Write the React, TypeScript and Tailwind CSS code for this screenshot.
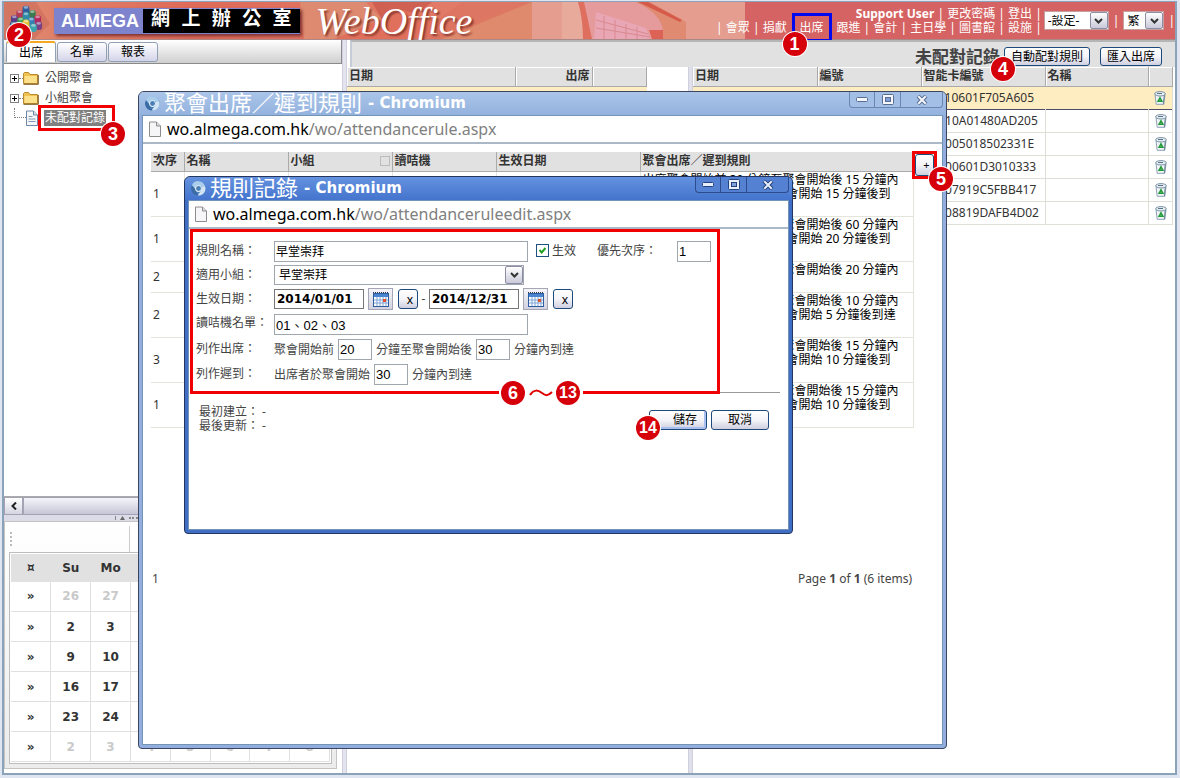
import type { ReactNode } from 'react';

const ui = "font-['Noto_Sans','Noto_Sans_CJK_TC',sans-serif]";
const wide = "font-['DejaVu_Sans','Noto_Sans_CJK_TC',sans-serif]";
const arial = "font-['Liberation_Sans','Noto_Sans_CJK_TC',sans-serif]";

const xpButton =
  'rounded-[3px] border border-[#1c4a7c] bg-linear-to-b from-white via-[#f4f4f9] to-[#cfcfe0] text-black whitespace-nowrap flex items-center justify-center';

function Badge({ n, className = '' }: { n: number; className?: string }) {
  return (
    <span
      className={`absolute z-20 flex size-6 items-center justify-center rounded-full bg-[#d6000b] font-['Liberation_Sans',sans-serif] leading-none text-white ring-1 ring-white ${n > 9 ? 'text-base' : 'text-lg'} font-bold ${className}`}
    >
      {n}
    </span>
  );
}

function LotusIcon() {
  const petals: [number, number, string][] = [
    [17, 5, '#2f5f9e'], [11, 9, '#b33a54'], [23, 9, '#3d7a4e'], [17, 11, '#2d8ca8'],
    [6, 14, '#5b3d86'], [28, 14, '#b6285c'], [12, 16, '#3b9a55'], [22, 16, '#357fb5'],
    [5, 20, '#27568d'], [29, 20, '#7b3f83'], [17, 18, '#e0c02e'], [10, 22, '#d98a22'], [24, 22, '#3aa3ae'],
  ];
  return (
    <svg className="h-[34px] w-9" viewBox="0 0 34 32" aria-hidden="true">
      {petals.map(([x, y, c]) => (
        <g key={`${x}-${y}`}>
          <rect x={x - 3.2} y={y - 3.5} width="6.4" height="8" rx="2.6" fill={c} />
          <ellipse cx={x} cy={y - 1.8} rx="2.2" ry="1.3" fill="#fff" opacity=".45" />
        </g>
      ))}
    </svg>
  );
}

function HeaderArt() {
  return (
    <svg className="absolute inset-0 h-full w-full" viewBox="0 0 1171 37" preserveAspectRatio="xMinYMid slice" aria-hidden="true">
      <defs>
        <linearGradient id="sky" x1="0" x2="1">
          <stop offset="0" stopColor="#e08a70" />
          <stop offset=".35" stopColor="#df6a58" />
          <stop offset="1" stopColor="#e2806c" />
        </linearGradient>
      </defs>
      <rect width="1400" height="37" fill="#d66363" />
      <rect width="530" height="37" fill="url(#sky)" />
      <path d="M0 0h32L46 22 30 37H0z" fill="#c96a5a" opacity=".6" />
      <path d="M296 0h66l34 37H300z" fill="#dd8a70" />
      <path d="M368 0h60l-20 16 -24 12z" fill="#c8574a" opacity=".7" />
      <path d="M330 37 400 8l40 14 -20 15z" fill="#e0705c" />
      <path d="M528 0v37H436L470 22z" fill="#df8a6c" />
      <path d="M528 0h-70l-50 37h30z" fill="#dc7460" opacity=".7" />
      <rect x="528" width="213" height="37" fill="#e59d8f" />
      <rect x="558" width="22" height="37" fill="#e7aa9b" />
      <path d="M576 0h62q30 18 24 37h-80q-2-20-6-37z" fill="#e59a9c" />
      <path d="M574 0h6l8 37h-9q0-20-5-37z" fill="#de6e5e" />
      <path d="M590 37 592 10l50 16 4 11z" fill="#e9a6b4" />
      <path d="M600 37V14M611 37V18M622 37V22M633 37V25M592 18l52 14M592 26l54 9" stroke="#d98a90" strokeWidth="1" />
      <path d="M632 0h14l36 20v17h-24q6-22-26-37z" fill="#e08a72" />
      <path d="M634 0h10l34 18-2 2z" fill="#d65a4a" />
      <path d="M645 28h14v9h-11z" fill="#dc6256" />
    </svg>
  );
}

function PageIcon({ lines = false }: { lines?: boolean }) {
  return (
    <svg className="h-4 w-3 shrink-0" viewBox="0 0 12 16" aria-hidden="true">
      <path d="M.5 1h7L11.500 5v10.500H.5z" fill="#f6f6f8" stroke={lines ? '#6c87a8' : '#8c8c8c'} />
      <path d="M7.500 1v4h4" fill="#dcdcdc" stroke={lines ? '#6c87a8' : '#8c8c8c'} />
      {lines && <path d="M2.500 6.500h4M2.500 9h7M2.500 11.500h7" stroke="#7d97b5" />}
    </svg>
  );
}

function FolderIcon() {
  return (
    <svg className="h-[13px] w-4 shrink-0" viewBox="0 0 16 13" aria-hidden="true">
      <path d="M.5 11.500v-10l1-1h4l1.500 2h7.500v9z" fill="#f1c24f" stroke="#b9892f" />
      <path d="M1.500 4h12.500v7H1.500z" fill="#fce08a" />
      <path d="M.5 12.300h14.800V3" stroke="#7a5a1e" fill="none" />
    </svg>
  );
}

function ChromiumIcon() {
  return (
    <svg className="size-[15px] shrink-0" viewBox="0 0 16 16" aria-hidden="true">
      <circle cx="8" cy="8" r="7.500" fill="#4f86bd" />
      <path d="M1 4.500A7.500 7.500 0 0 1 15 5.500H8L5 9z" fill="#a9cdea" />
      <path d="M15 5.500A7.500 7.500 0 0 1 7 15.500L11.500 9V5.500z" fill="#d3e5f5" />
      <path d="M1 4.500 5 9.500l3 6A7.500 7.500 0 0 1 1 4.500z" fill="#3a6ca5" />
      <circle cx="8" cy="8" r="3.600" fill="#e6f0f9" />
      <circle cx="8" cy="8" r="2.600" fill="#4b7fb8" />
    </svg>
  );
}

function TrashIcon() {
  return (
    <svg className="h-[14px] w-3" viewBox="0 0 12 14" aria-hidden="true">
      <path d="M1 3.500 2.200 13.300h7.600L11 3.500z" fill="#f1f5f9" stroke="#8ea2b3" />
      <path d="M9.800 13.300 11 3.500H9.800L8.800 13.300z" fill="#6d8598" />
      <ellipse cx="6" cy="2.800" rx="5.400" ry="2.200" fill="#e6eef5" stroke="#7d94a6" />
      <path d="M3 2.500h5" stroke="#5d7486" />
      <path d="M6 6.800 7.900 10.300H4.100z" fill="none" stroke="#1f9a35" strokeWidth="1.500" />
    </svg>
  );
}

function CalendarIcon() {
  return (
    <svg className="h-[15px] w-4" viewBox="0 0 16 15" aria-hidden="true">
      <rect x=".5" y="1.500" width="15" height="13" fill="#fff" stroke="#2d5c9f" />
      <path d="M1 2h14v3H1z" fill="#4a83cf" />
      <path d="M0 .5h16" stroke="#334" strokeDasharray="1 1" />
      <path d="M1 8h14M1 11h14M4 5v9M7 5v9M10 5v9M13 5v9" stroke="#7fa3d6" />
      <rect x="10" y="7" width="3" height="3" fill="#e2502b" />
    </svg>
  );
}

function Chevron() {
  return (
    <span className="pointer-events-none absolute inset-y-px right-px flex w-[18px] items-center justify-center rounded-[2px] border border-[#8d8da6] bg-linear-to-b from-white to-[#c9c9da]">
      <svg className="h-[6px] w-[9px]" viewBox="0 0 9 6" aria-hidden="true">
        <path d="M1 1l3.500 3.500L8 1" fill="none" stroke="#333" strokeWidth="2" />
      </svg>
    </span>
  );
}

function MiniSelect({ label, value, className }: { label: string; value: string; className: string }) {
  return (
    <span className={`relative block ${className}`}>
      <select aria-label={label} className="block h-full w-full appearance-none border border-[#c5a0a0] bg-white pl-[3px] text-xs leading-none text-black">
        <option>{value}</option>
      </select>
      <Chevron />
    </span>
  );
}

const menu = ['會眾', '捐獻', '出席', '跟進', '會計', '主日學', '圖書館', '設施'];

function Header() {
  return (
    <header className="relative flex h-[38px] justify-between border-b border-[#a88] text-white">
      <HeaderArt />
      <div className="relative flex items-center pl-1">
        <LotusIcon />
        <div className="ml-[10px] flex h-[26px] items-center bg-[#7d83cd] pl-[7px] shadow-[2px_2px_3px_#7a3030]">
          <span className="font-['Liberation_Sans',sans-serif] text-lg leading-none font-bold">ALMEGA</span>
          <span className="ml-1 flex h-6 items-center bg-black px-2 font-['Liberation_Mono','Noto_Sans_CJK_TC',monospace] text-[19px] leading-none font-bold whitespace-nowrap">
            網 上 辦 公 室
          </span>
        </div>
        <span className="ml-4 font-['Liberation_Serif',serif] text-[38px] leading-none italic [text-shadow:2px_2px_2px_#8a3a30]">WebOffice</span>
      </div>
      <div className="relative flex items-start">
        <nav className="pt-[5px] text-right text-xs leading-[14px] whitespace-nowrap">
          <div>
            <b>Support User</b> | <a href="#password">更改密碼</a> | <a href="#logout">登出</a> |
          </div>
          <div>
            {menu.map((m, i) => (
              <span key={m}>
                |{' '}
                {i === 2 ? (
                  <span className="relative">
                    <a href={`#${m}`}>{m}</a>
                    <span className="absolute -inset-x-2 -inset-y-[6px] border-[3px] border-[#0008f0]" />
                    <Badge n={1} className="top-[13px] -left-[17px]" />
                  </span>
                ) : (
                  <a href={`#${m}`}>{m}</a>
                )}{' '}
              </span>
            ))}
            |
          </div>
        </nav>
        <div className="flex items-center gap-1 pt-[9px] pl-[2px] text-xs leading-none">
          <MiniSelect label="設定" value="-設定-" className="h-[19px] w-[65px]" />
          <span>|</span>
          <MiniSelect label="語言" value="繁" className="h-[19px] w-[41px]" />
          <span>|</span>
        </div>
      </div>
    </header>
  );
}

function TreeRow({ expandable, children }: { expandable?: boolean; children: ReactNode }) {
  return (
    <li className="flex h-5 items-center">
      {expandable ? (
        <>
          <span className="flex size-[9px] items-center justify-center border border-[#808080] bg-white">
            <svg className="size-[5px]" viewBox="0 0 5 5" aria-hidden="true"><path d="M0 2.500h5M2.500 0v5" stroke="#000" /></svg>
          </span>
          <span className="w-1 border-t border-dotted border-[#808080]" />
        </>
      ) : (
        <span className="ml-1 h-[10px] w-[12px] self-start border-b border-l border-dotted border-[#808080]" />
      )}
      {children}
    </li>
  );
}

const weeks = [
  [26, 27, 28, 29, 30, 31, 1],
  [2, 3, 4, 5, 6, 7, 8],
  [9, 10, 11, 12, 13, 14, 15],
  [16, 17, 18, 19, 20, 21, 22],
  [23, 24, 25, 26, 27, 28, 1],
  [2, 3, 4, 5, 6, 7, 8],
];

function isMuted(week: number, day: number) {
  return (week === 0 && day > 20) || (week === 4 && day < 20) || week === 5;
}

function CalendarPanel() {
  return (
    <section className="mr-[5px] mb-1 border border-[#c4c4c4] bg-linear-to-b from-white to-[#ececec] p-1">
      <div className="flex h-[26px] items-center">
        <span className="ml-px h-[14px] border-l-2 border-dotted border-[#bbb]" />
        <span className="ml-[117px] h-full border-l border-[#ccc]" />
      </div>
      <div className="border border-[#bdbdbd] bg-white p-px">
        <table className={`w-full table-fixed border-collapse text-center text-xs font-bold text-[#333] ${wide}`}>
          <thead>
            <tr className="h-7 bg-[#e1e1e1]">
              {['¤', 'Su', 'Mo', 'Tu', 'We', 'Th', 'Fr', 'Sa'].map((d) => (
                <th key={d}>{d}</th>
              ))}
            </tr>
          </thead>
          <tbody>
            {weeks.map((w, wi) => (
              <tr key={wi} className="h-[30px]">
                <td className="border-r border-b border-[#e0e0e0] p-0">»</td>
                {w.map((d, di) => (
                  <td key={di} className={`border-r border-b border-[#e0e0e0] p-0 ${isMuted(wi, d) ? 'text-[#c9c9c9]' : ''}`}>{d}</td>
                ))}
              </tr>
            ))}
          </tbody>
        </table>
      </div>
    </section>
  );
}

function LeftPane() {
  return (
    <aside className="flex w-[338px] shrink-0 flex-col">
      <div className="relative flex h-[24px] items-end gap-px border border-t-0 border-l-0 border-[#8a8a8a] bg-linear-to-b from-white to-[#cfcfcf] pb-px pl-[2px] text-xs text-black">
        <button className="h-[21px] w-[50px] rounded-t-[3px] border border-t-2 border-b-0 border-[#91a0b5] border-t-[#f5a623] bg-white">出席</button>
        <button className="h-5 w-[50px] rounded-[3px] border border-[#91a0b5] bg-linear-to-b from-white to-[#d4d4ea]">名單</button>
        <button className="h-5 w-[50px] rounded-[3px] border border-[#91a0b5] bg-linear-to-b from-white to-[#d4d4ea]">報表</button>
        <Badge n={2} className="-top-[17px] left-[3px]" />
      </div>
      <ul className="flex-1 pt-1 pl-[6px] text-xs text-[#444]">
        <TreeRow expandable><FolderIcon /><span className="ml-[6px]">公開聚會</span></TreeRow>
        <TreeRow expandable><FolderIcon /><span className="ml-[6px]">小組聚會</span></TreeRow>
        <TreeRow>
          <PageIcon lines />
          <span className="relative flex h-[26px] items-center border-[3px] border-[#f00000] pr-[6px] pl-[3px]">
            <span className="bg-[#808080] px-px leading-4 text-white">未配對記錄</span>
            <Badge n={3} className="top-[14px] left-[60px]" />
          </span>
        </TreeRow>
      </ul>
      <div className="flex h-[19px] border-t border-[#aaa] bg-[#e6e6ee]">
        <button aria-label="向左捲動" className="flex w-[19px] items-center justify-center border border-[#a3a3b5] bg-linear-to-b from-white to-[#d5d5e2]">
          <svg className="h-2 w-[6px]" viewBox="0 0 6 8" aria-hidden="true"><path d="M5 .5 1.500 4 5 7.500" fill="none" stroke="#222" strokeWidth="2" /></svg>
        </button>
        <div className="flex-1 border border-[#a3a3b5] bg-linear-to-b from-[#f5f5f9] to-[#c6c6d8]" />
      </div>
      <div className="flex h-[6px] items-center gap-1 bg-[#dcdce8] pl-[111px]">
        <span className="h-1 border-l border-[#888]" />
        <svg className="h-1 w-[5px]" viewBox="0 0 5 4" aria-hidden="true"><path d="M0 4 2.500 0 5 4z" fill="#666" /></svg>
        <span className="w-6 border-t-2 border-dotted border-[#888]" />
      </div>
      <CalendarPanel />
    </aside>
  );
}

const headCell = 'border-r border-b border-[#aaa] bg-[#e1e1e1] px-[2px] py-0 font-bold shadow-[inset_1px_1px_0_#fff]';

const cards = [
  '00010601F705A605',
  '00010A01480AD205',
  '000005018502331E',
  '00000601D3010333',
  '00007919C5FBB417',
  '00008819DAFB4D02',
];

function MainPane() {
  return (
    <div className="flex min-w-0 flex-1 flex-col">
      <div className="relative ml-[3px] flex h-[27px] items-center justify-end gap-[10px] border-2 border-r-0 border-b-0 border-[#b5b5b5] border-l-[#c6cbd8] bg-[#e1e1e1] pt-1 pr-[13px]">
        <h1 className="-mr-[6px] text-[17px] leading-none font-bold text-[#444]">未配對記錄</h1>
        <span className="relative">
          <button className={`${xpButton} h-[19px] w-[86px] text-xs`}>自動配對規則</button>
          <Badge n={4} className="top-[10px] -left-[13px]" />
        </span>
        <button className={`${xpButton} h-[19px] w-[62px] text-xs`}>匯入出席</button>
      </div>
      <div className="flex flex-1">
        <div className="w-[341px] shrink-0">
          <table className="w-[300px] table-fixed border-collapse text-left text-xs text-[#333]">
            <thead>
              <tr className="h-[19px]">
                <th className={`w-[168px] ${headCell}`}>日期</th>
                <th className={`w-[77px] text-right ${headCell}`}>出席</th>
                <th className={headCell} />
              </tr>
            </thead>
            <tbody>
              <tr className="h-[23px] border-y border-[#4b4b6b] bg-[#ffedc2]"><td colSpan={3} /></tr>
            </tbody>
          </table>
        </div>
        <div className="w-[5px] shrink-0 border-x border-[#cfcfe0] bg-[#e0e0ea]" />
        <div className="min-w-0 flex-1 pr-[2px]">
          <table className="w-full table-fixed border-collapse text-left text-xs text-[#333]">
            <thead>
              <tr className="h-[19px]">
                <th className={`w-[124px] ${headCell}`}>日期</th>
                <th className={`w-[104px] ${headCell}`}>編號</th>
                <th className={`w-[124px] ${headCell}`}>智能卡編號</th>
                <th className={headCell}>名稱</th>
                <th className={`w-[24px] ${headCell}`} />
              </tr>
            </thead>
            <tbody>
              {cards.map((c, i) => (
                <tr key={c} className={`h-[23px] ${i === 0 ? 'border-y border-[#4b4b6b] bg-[#ffedc2]' : 'border-b border-[#dfdfd8]'}`}>
                  {['', '', c, ''].map((v, k) => (
                    <td key={k} className={`px-[3px] py-0 ${i ? 'border-r border-[#dfdfd8]' : ''}`}>{v}</td>
                  ))}
                  <td className="border-r border-[#dfdfd8] p-0">
                    <button aria-label="刪除" className="mx-auto flex items-center"><TrashIcon /></button>
                  </td>
                </tr>
              ))}
            </tbody>
          </table>
        </div>
      </div>
    </div>
  );
}

type WinProps = { active?: boolean; title: string; host: string; path: string; className: string; children: ReactNode };

function BrowserWindow({ active, title, host, path, className, children }: WinProps) {
  const chrome = active
    ? 'bg-[#3f6ec4] border-[#24365e]'
    : 'bg-[#93aede] border-[#3c4660]';
  const bar = active ? 'from-[#6492df] to-[#4474cd]' : 'from-[#abc5e9] to-[#93b2de]';
  const control = `flex h-4 items-center justify-center border border-t-0 ${active ? 'border-[#2c4c8c] bg-[#5581d2]' : 'border-[#6a86b4] bg-[#a3bfe6]'}`;
  const glyph = active ? '#e8eefa' : '#f4f7fc';
  const edge = active ? '#24427c' : '#5a6c90';
  return (
    <section className={`absolute flex flex-col rounded-t-[6px] rounded-b-[4px] border px-[3px] pb-[3px] ${chrome} ${className}`}>
      <div className={`-mx-[3px] flex h-[23px] items-center rounded-t-[5px] bg-linear-to-b pl-[6px] ${bar}`}>
        <ChromiumIcon />
        <h2 className={`ml-1 flex items-center text-[15px] leading-none font-bold whitespace-nowrap text-white ${wide}`}>
          <span className="mr-[6px] text-[22px] leading-none font-normal">{title}</span>- Chromium
        </h2>
        <div className="mr-[3px] ml-auto flex self-start">
          <button aria-label="最小化" className={`${control} w-[26px] rounded-bl-[4px]`}>
            <svg className="h-[5px] w-3" viewBox="0 0 12 5"><rect x=".5" y=".5" width="11" height="4" rx="1" fill={glyph} stroke={edge} /></svg>
          </button>
          <button aria-label="最大化" className={`${control} w-[26px] border-l-0`}>
            <svg className="h-[11px] w-3" viewBox="0 0 12 11">
              <rect x=".5" y=".5" width="11" height="10" rx="1" fill={glyph} stroke={edge} />
              <rect x="3.500" y="3.500" width="5" height="4" fill="#7fa0d8" stroke={edge} />
            </svg>
          </button>
          <button aria-label="關閉" className={`${control} w-[42px] rounded-br-[4px] border-l-0`}>
            <svg className="h-[10px] w-3" viewBox="0 0 12 10">
              <path d="M2 1l8 8M10 1L2 9" stroke={edge} strokeWidth="4" />
              <path d="M2.300 1.300l7.400 7.400M9.700 1.300L2.300 8.700" stroke={glyph} strokeWidth="2" />
            </svg>
          </button>
        </div>
      </div>
      <div className="flex flex-1 flex-col border border-[#7295b5] bg-white">
        <div className="flex h-7 items-center gap-[6px] border-b-2 border-[#aab8c8] pl-[6px] text-base leading-none whitespace-nowrap">
          <PageIcon />
          <span className="text-[#808080]"><span className="text-black">{host}</span>{path}</span>
        </div>
        {children}
      </div>
    </section>
  );
}

const rules = [
  { order: 1, before: 30, within: 15, late: 15 },
  { order: 1, before: 30, within: 60, late: 20 },
  { order: 2, before: 30, within: 20, late: 0 },
  { order: 2, before: 30, within: 10, late: 5 },
  { order: 3, before: 30, within: 15, late: 10 },
  { order: 1, before: 30, within: 15, late: 10 },
];

function RulesWindow() {
  const head = 'border-r border-b border-[#aaa] bg-[#e1e1e1] px-[2px] py-0 font-bold';
  const cell = 'border-r border-b border-[#e4e4dc] px-[2px] py-0';
  return (
    <BrowserWindow title="聚會出席／遲到規則" host="wo.almega.com.hk" path="/wo/attendancerule.aspx" className="top-[91px] left-[138px] h-[658px] w-[809px]">
      <div className="flex items-start pt-2 pl-2">
        <table className="w-[763px] table-fixed border-collapse text-left text-xs leading-[14px] text-[#333]">
          <thead>
            <tr className="h-[19px]">
              <th className={`w-[33px] ${head}`}>次序</th>
              <th className={`w-[104px] ${head}`}>名稱</th>
              <th className={`w-[104px] ${head}`}>
                <span className="flex items-center justify-between">小組<span className="size-[10px] border border-[#bbb]" /></span>
              </th>
              <th className={`w-[104px] ${head}`}>讀咭機</th>
              <th className={`w-[144px] ${head}`}>生效日期</th>
              <th className={`${head} border-r-[#e1e1e1]`}>聚會出席／遲到規則</th>
            </tr>
          </thead>
          <tbody>
            {rules.map((r, i) => (
              <tr key={i} className={r.late ? 'h-[45px]' : 'h-[31px]'}>
                <td className={cell}>{r.order}</td>
                <td className={cell} />
                <td className={cell} />
                <td className={cell} />
                <td className={cell} />
                <td className={`${cell} align-top whitespace-nowrap text-black`}>
                  <div className="pt-px">出席聚會開始前 {r.before} 分鐘至聚會開始後 {r.within} 分鐘內</div>
                  {r.late > 0 && <div>到達，出席者如果於遲過聚會開始 {r.late} 分鐘後到{r.late < 10 && '達'}</div>}
                </td>
              </tr>
            ))}
          </tbody>
        </table>
        <span className="relative -mt-px -ml-[2px] border-[3px] border-[#f00000] bg-white">
          <button aria-label="新增" className={`${xpButton} h-[22px] w-[19px] pl-1 text-[11px]`}>+</button>
          <Badge n={5} className="top-[13px] left-[14px]" />
        </span>
      </div>
      <div className="mt-[141px] mr-[29px] ml-2 flex items-center justify-between px-px text-xs leading-5 text-[#444]">
        <span>1</span>
        <span>Page <b>1</b> of <b>1</b> (6 items)</span>
      </div>
    </BrowserWindow>
  );
}

function Row({ label, htmlFor, className, children }: { label: string; htmlFor: string; className: string; children: ReactNode }) {
  return (
    <div className={`flex items-center ${className}`}>
      <label htmlFor={htmlFor} className="w-[78px] shrink-0 self-stretch leading-6">{label}</label>
      {children}
    </div>
  );
}

const field = `h-[21px] border border-[#a0a6ad] bg-white pl-px text-[13px] leading-none text-black ${arial}`;

function DateField({ id, label, value }: { id: string; label: string; value: string }) {
  return (
    <>
      <input id={id} aria-label={label} defaultValue={value} className={`h-5 w-[90px] border border-[#777] bg-white pl-[2px] text-xs leading-none font-bold text-black ${wide}`} />
      <button aria-label="選擇日期" className="ml-1 flex h-[22px] w-[25px] items-center justify-center border border-[#a5a5b5] bg-linear-to-b from-[#f5f5fa] to-[#d2d2e0]">
        <CalendarIcon />
      </button>
      <button aria-label="清除日期" className={`${xpButton} ml-[5px] size-5 pt-[2px] pl-1 text-xs leading-none`}>x</button>
    </>
  );
}

function EditWindow() {
  return (
    <BrowserWindow active title="規則記錄" host="wo.almega.com.hk" path="/wo/attendanceruleedit.aspx" className="top-[176px] left-[184px] h-[358px] w-[609px]">
      <form className="flex-1 text-xs text-[#444]">
        <div className="relative ml-px h-[165px] w-[530px] border-[3px] border-[#f00000] pt-[7px] pl-[3px] whitespace-nowrap">
          <Row label="規則名稱：" htmlFor="name" className="h-6">
            <input id="name" defaultValue="早堂崇拜" className="h-[21px] w-[254px] border border-[#a0a6ad] bg-white pl-px text-xs leading-none text-black" />
            <span className="relative ml-2 size-[13px] -translate-y-px">
              <input id="enabled" type="checkbox" defaultChecked className="block size-[13px] appearance-none border border-[#1c5180] bg-white" />
              <svg className="pointer-events-none absolute top-[3px] left-[3px] size-[7px]" viewBox="0 0 7 7" aria-hidden="true"><path d="M.5 3 2.700 5.500 6.500 1" fill="none" stroke="#21a121" strokeWidth="2" /></svg>
            </span>
            <label htmlFor="enabled" className="ml-[3px]">生效</label>
            <label htmlFor="priority" className="ml-[21px] w-20">優先次序：</label>
            <input id="priority" defaultValue="1" className={`${field} w-[34px]`} />
          </Row>
          <Row label="適用小組：" htmlFor="group" className="h-6">
            <span className="relative h-5 w-[250px]">
              <select id="group" className="block h-full w-full appearance-none border border-[#a0a6ad] bg-white pl-1 text-xs leading-none text-black">
                <option>早堂崇拜</option>
              </select>
              <Chevron />
            </span>
          </Row>
          <Row label="生效日期：" htmlFor="from" className="h-6">
            <DateField id="from" label="開始日期" value="2014/01/01" />
            <span className="w-[11px] text-center">-</span>
            <DateField id="to" label="結束日期" value="2014/12/31" />
          </Row>
          <Row label="讀咭機名單：" htmlFor="readers" className="h-[26px]">
            <input id="readers" defaultValue="01、02、03" className={`${field} w-[254px]`} />
          </Row>
          <Row label="列作出席：" htmlFor="before" className="h-[25px]">
            <span>聚會開始前</span>
            <input id="before" defaultValue="20" className={`${field} ml-1 w-[34px]`} />
            <label htmlFor="after" className="ml-1">分鐘至聚會開始後</label>
            <input id="after" defaultValue="30" className={`${field} ml-1 w-[34px]`} />
            <span className="ml-1">分鐘內到達</span>
          </Row>
          <Row label="列作遲到：" htmlFor="late" className="h-[25px]">
            <span>出席者於聚會開始</span>
            <input id="late" defaultValue="30" className={`${field} ml-1 w-[34px]`} />
            <span className="ml-1">分鐘內到達</span>
          </Row>
          <div className="absolute -bottom-[15px] left-[306px] flex h-[26px] w-[84px] items-center justify-center bg-white">
            <Badge n={6} className="left-[2px]" />
            <svg className="h-2 w-6" viewBox="0 0 24 8" aria-hidden="true"><path d="M1 6C5 0 9 1 13 4s6 3 10-1" fill="none" stroke="#e00000" strokeWidth="2" /></svg>
            <Badge n={13} className="right-[3px]" />
          </div>
        </div>
        <div className="-mt-[2px] mr-2 ml-[531px] h-[2px] border-t border-[#999]" />
        <div className="flex items-start justify-between pt-[11px] pr-[19px] pl-[10px]">
          <div className="leading-[14px]">
            <p>最初建立： -</p>
            <p>最後更新： -</p>
          </div>
          <div className="relative mt-[5px] flex gap-1">
            <button type="button" className={`${xpButton} h-5 w-[58px] pl-[14px] shadow-[inset_-1px_-1px_0_1px_#a9bff0]`}>儲存</button>
            <button type="button" className={`${xpButton} h-5 w-[58px]`}>取消</button>
            <Badge n={14} className="top-[6px] -left-[13px]" />
          </div>
        </div>
      </form>
    </BrowserWindow>
  );
}

export default function App() {
  return (
    <div className={`relative flex min-h-screen flex-col bg-[#dfe5f1] pt-px pr-[3px] pb-[3px] pl-[2px] ${ui}`}>
      <div className="flex flex-1 flex-col border-2 border-t border-[#8ba3b8] bg-white">
        <Header />
        <main className="flex flex-1">
          <LeftPane />
          <div className="w-[5px] shrink-0 border-x border-[#cfcfe0] bg-[#e4e4ee]" />
          <MainPane />
        </main>
      </div>
      <RulesWindow />
      <EditWindow />
    </div>
  );
}
